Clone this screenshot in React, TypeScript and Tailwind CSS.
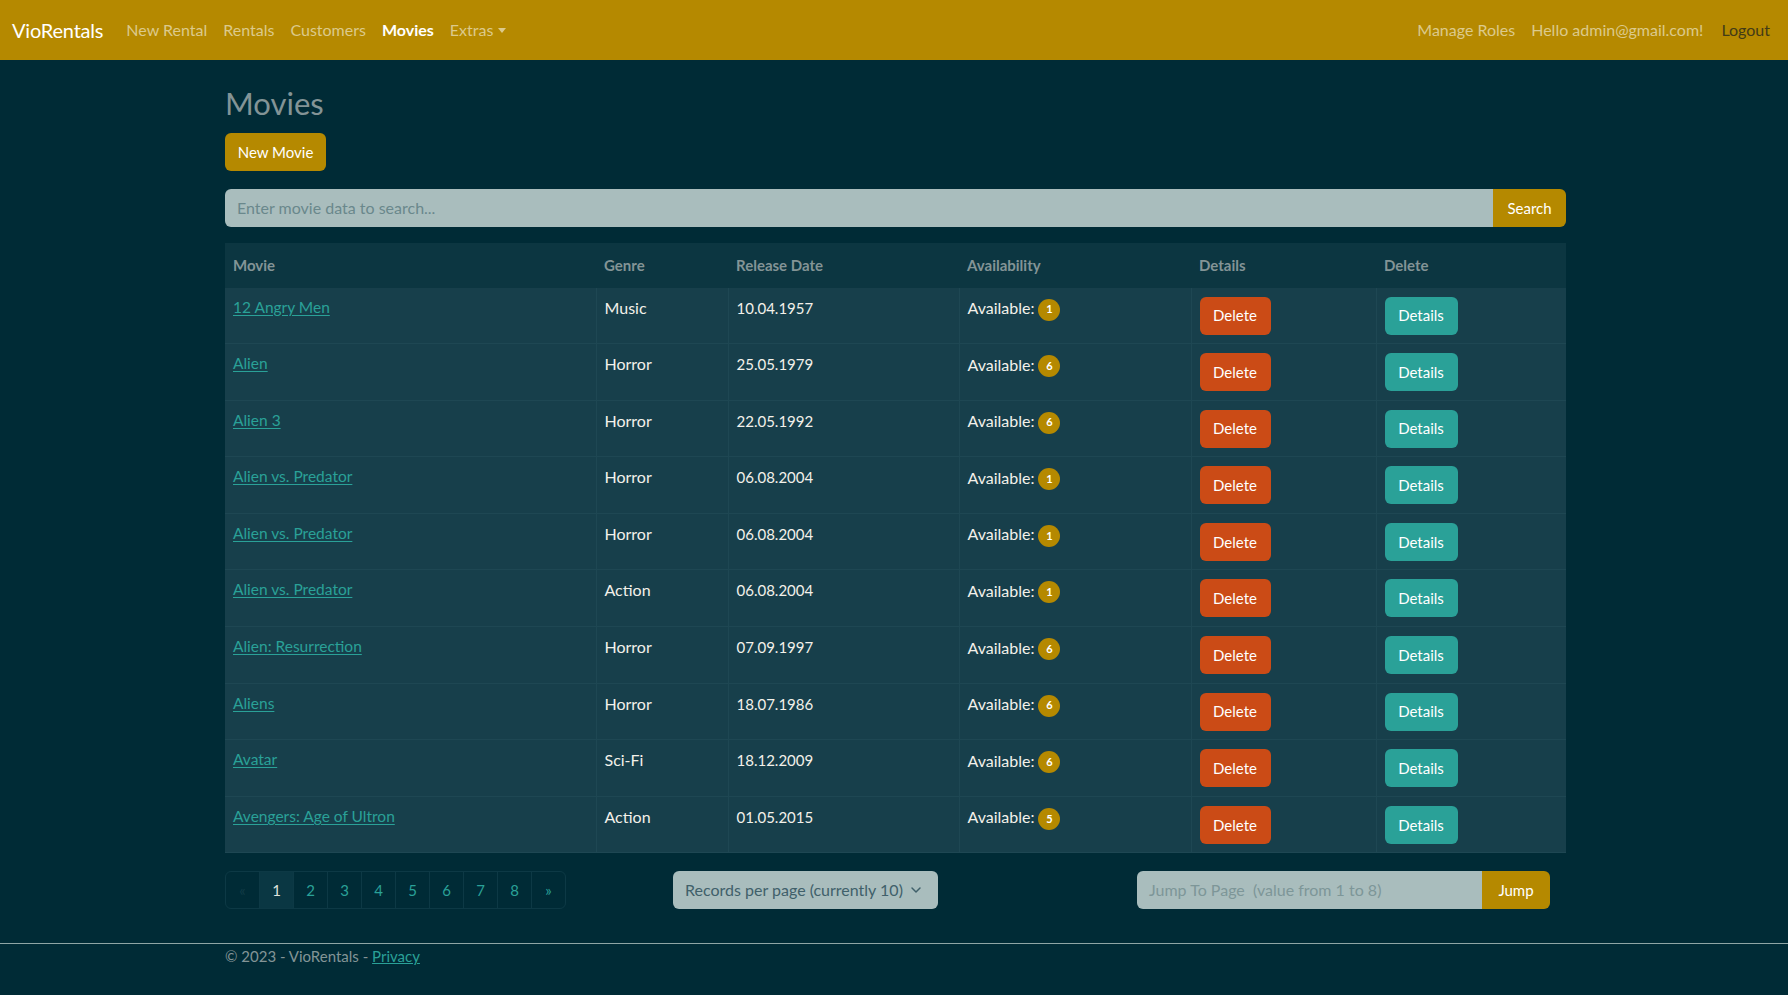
import React from "react";
import { ChevronDown } from "lucide-react";

const rows = [
  { title: "12 Angry Men", genre: "Music", date: "10.04.1957", avail: 1 },
  { title: "Alien", genre: "Horror", date: "25.05.1979", avail: 6 },
  { title: "Alien 3", genre: "Horror", date: "22.05.1992", avail: 6 },
  { title: "Alien vs. Predator", genre: "Horror", date: "06.08.2004", avail: 1 },
  { title: "Alien vs. Predator", genre: "Horror", date: "06.08.2004", avail: 1 },
  { title: "Alien vs. Predator", genre: "Action", date: "06.08.2004", avail: 1 },
  { title: "Alien: Resurrection", genre: "Horror", date: "07.09.1997", avail: 6 },
  { title: "Aliens", genre: "Horror", date: "18.07.1986", avail: 6 },
  { title: "Avatar", genre: "Sci-Fi", date: "18.12.2009", avail: 6 },
  { title: "Avengers: Age of Ultron", genre: "Action", date: "01.05.2015", avail: 5 },
];

export default function App() {
  return (
    <div className="min-h-[995px] bg-[#002b36] text-[#839496] font-['Lato','Noto_Sans',sans-serif] text-[16px]">
      {/* Navbar */}
      <nav className="h-[60px] bg-[#b58900] flex items-center pl-[12px] pr-[10px]">
        <span className="text-[20px] text-white mr-[15px] tracking-[-0.2px]">VioRentals</span>
        <div className="flex items-center">
          <span className="px-2 text-[#dcca8c]">New Rental</span>
          <span className="px-2 text-[#dcca8c]">Rentals</span>
          <span className="px-2 text-[#dcca8c]">Customers</span>
          <span className="px-2 text-white font-bold">Movies</span>
          <span className="px-2 text-[#dcca8c] flex items-center">
            Extras
            <span className="ml-[5px] inline-block w-0 h-0 border-l-[4px] border-r-[4px] border-t-[5px] border-l-transparent border-r-transparent border-t-[#dcca8c]" />
          </span>
        </div>
        <div className="ml-auto flex items-center">
          <span className="px-2 text-[#dcca8c]">Manage Roles</span>
          <span className="px-2 text-[#dcca8c]">Hello admin@gmail.com!</span>
          <span className="px-2 ml-[2px] text-[#433b17]">Logout</span>
        </div>
      </nav>

      <main className="w-[1341px] ml-[225px] pt-[22px]">
        <h1 className="text-[31px] leading-[43px] h-[43px] text-[#839496]">Movies</h1>
        <button className="mt-[8px] h-[38px] w-[101px] rounded-[6px] bg-[#b58900] text-white text-[15px]">
          New Movie
        </button>

        <div className="mt-[18px] flex h-[38px]">
          <div className="flex-1 bg-[#a9bdbd] rounded-l-[6px] flex items-center pl-[12px] text-[#6a888c]">
            Enter movie data to search...
          </div>
          <button className="w-[73px] bg-[#b58900] text-white rounded-r-[6px] text-[15px]">Search</button>
        </div>

        <table className="mt-[16px] w-[1341px] table-fixed border-collapse">
          <colgroup>
            <col className="w-[371px]" />
            <col className="w-[132px]" />
            <col className="w-[231px]" />
            <col className="w-[232px]" />
            <col className="w-[185px]" />
            <col className="w-[190px]" />
          </colgroup>
          <thead>
            <tr className="h-[44px] bg-[#0c3641] text-left">
              {["Movie", "Genre", "Release Date", "Availability", "Details", "Delete"].map((h) => (
                <th key={h} className="px-2 font-bold text-[15px] text-[#839496] border-b border-[#0c3641]">
                  {h}
                </th>
              ))}
            </tr>
          </thead>
          <tbody>
            {rows.map((r, i) => (
              <tr key={i} className="h-[56.6px] bg-[#173f4b] border-b border-[#1e4753]">
                <td className="px-2 pt-[8px] align-top text-[15.5px] border-r border-[#1e4753]">
                  <a className="text-[#2aa198] underline underline-offset-[2px]">{r.title}</a>
                </td>
                <td className="px-2 pt-[8px] align-top text-[#f3f1ea] border-r border-[#1e4753]">{r.genre}</td>
                <td className="px-2 pt-[8px] align-top text-[15px] text-[#f3f1ea] border-r border-[#1e4753]">
                  <span className="inline-block pt-[1px]">{r.date}</span>
                </td>
                <td className="px-2 pt-[8px] align-top text-[#f3f1ea] border-r border-[#1e4753]">
                  <span className="inline-flex items-center">
                    Available:
                    <span className="ml-[4px] mt-[3px] inline-flex items-center justify-center w-[22px] h-[22px] rounded-full bg-[#b58900] text-white text-[11px] font-bold">
                      {r.avail}
                    </span>
                  </span>
                </td>
                <td className="px-2 pt-[9px] pb-0 align-top border-r border-[#1e4753]">
                  <button className="block h-[38px] w-[71px] rounded-[6px] bg-[#cb4b16] text-white text-[15px]">Delete</button>
                </td>
                <td className="px-2 pt-[9px] pb-0 align-top">
                  <button className="block h-[38px] w-[73px] rounded-[6px] bg-[#2aa198] text-white text-[15px]">Details</button>
                </td>
              </tr>
            ))}
          </tbody>
        </table>

        <div className="mt-[18px] grid grid-cols-3 h-[38px]">
          <div className="flex">
            <div className="flex h-[38px] rounded-[6px] border border-[#0d3945] overflow-hidden text-[15px]">
              <span className="w-[33px] flex items-center justify-center text-[#123c47]">«</span>
              {["1", "2", "3", "4", "5", "6", "7", "8", "»"].map((p) => (
                <span
                  key={p}
                  className={
                    p === "1"
                      ? "w-[34px] flex items-center justify-center border-l border-[#0d3945] bg-[#0a3743] text-[#dfe3dc]"
                      : "w-[34px] flex items-center justify-center border-l border-[#0d3945] text-[#2aa198]"
                  }
                >
                  {p}
                </span>
              ))}
            </div>
          </div>
          <div className="pl-[1px]">
            <div className="w-[265px] h-[38px] rounded-[6px] bg-[#a9bdbd] flex items-center pl-[12px] pr-[14px] text-[#40606a]">
              <span>Records per page (currently 10)</span>
              <ChevronDown className="ml-auto" size={16} strokeWidth={2.2} />
            </div>
          </div>
          <div className="pl-[18px] pr-[16px] flex">
            <div className="flex-1 bg-[#a9bdbd] rounded-l-[6px] flex items-center pl-[12px] text-[#7d9698]">
              Jump To Page&nbsp; (value from 1 to 8)
            </div>
            <button className="w-[68px] bg-[#b58900] text-white rounded-r-[6px] text-[15px]">Jump</button>
          </div>
        </div>
      </main>

      <footer className="mt-[34px] border-t border-[#8fa6a6]">
        <div className="w-[1341px] ml-[225px] leading-[24px] text-[15px] text-[#839496]">
          © 2023 - VioRentals - <a className="text-[#2aa198] underline">Privacy</a>
        </div>
      </footer>
    </div>
  );
}
